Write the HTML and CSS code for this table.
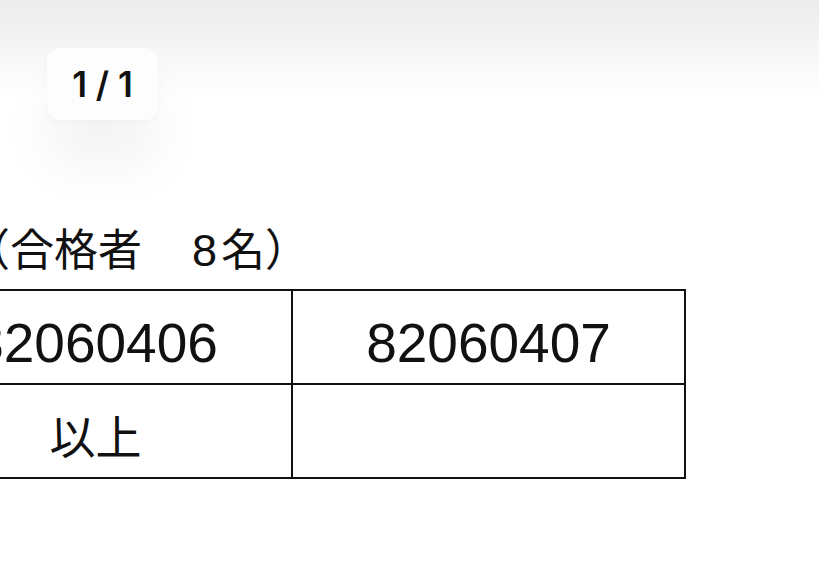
FILE: index.html
```html
<!DOCTYPE html>
<html lang="ja">
<head>
<meta charset="utf-8">
<title>PDF</title>
<link rel="stylesheet" href="styles.css">
</head>
<body>
<div class="viewer">
  <div class="page">
    <p class="title">（合格者　<span class="count">8</span>名）</p>
    <table class="grid">
      <tr>
        <td class="num">82060406</td>
        <td class="num">82060407</td>
      </tr>
      <tr>
        <td class="jp">以上</td>
        <td></td>
      </tr>
    </table>
  </div>
  <div class="top-shade"></div>
  <div class="page-badge">1 / 1</div>
</div>
</body>
</html>
```

FILE: styles.css
```css
html, body {
  margin: 0;
  padding: 0;
  background: #ffffff;
}

.viewer {
  position: relative;
  width: 819px;
  height: 579px;
  overflow: hidden;
  background: #ffffff;
}

.page {
  display: flex;
  flex-direction: column;
  margin-left: -102px;
  padding-top: 220px;
}

.title {
  margin: 0 0 0 68px;
  font-family: "Noto Sans CJK JP", sans-serif;
  font-size: 44px;
  line-height: 54px;
  color: #111111;
  white-space: nowrap;
}

.title .count {
  font-family: "Liberation Sans", Arial, sans-serif;
  font-size: 45px;
  margin: 0 4px 0 6px;
}

.grid {
  margin-top: 11px;
  border-collapse: collapse;
  width: 788px;
}

.grid td {
  border: 2px solid #111111;
  width: 393px;
  height: 92px;
  padding: 0;
  text-align: center;
  vertical-align: middle;
  color: #111111;
}

.grid .num {
  font-family: "Liberation Sans", Arial, sans-serif;
  font-size: 55px;
  height: 80px;
  padding-top: 12px;
}

.grid .jp {
  font-family: "Noto Sans CJK JP", sans-serif;
  font-size: 46px;
  height: 86px;
  padding-top: 6px;
}

.top-shade {
  position: absolute;
  left: 0;
  top: 0;
  width: 100%;
  height: 100px;
  background: linear-gradient(to bottom, #ebebeb 0%, #f4f4f4 40%, #fbfbfb 75%, rgba(255,255,255,0) 100%);
  pointer-events: none;
}

.page-badge {
  position: absolute;
  left: 47px;
  top: 48px;
  width: 111px;
  height: 72px;
  border-radius: 12px;
  background: #fdfdfd;
  box-shadow: 0 45px 55px rgba(0, 0, 0, 0.05), 0 2px 6px rgba(0, 0, 0, 0.03);
  display: flex;
  align-items: center;
  justify-content: center;
  font-family: Inter, "Noto Sans", sans-serif;
  font-weight: 600;
  font-size: 35px;
  color: #111111;
}
```
